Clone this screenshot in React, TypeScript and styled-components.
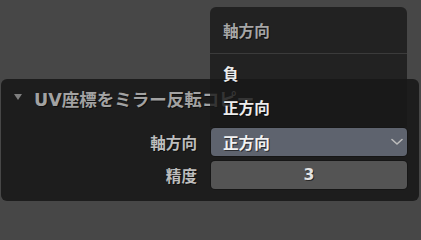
import React from 'react'
import styled, { createGlobalStyle } from 'styled-components'

const GlobalStyle = createGlobalStyle`
  html, body {
    margin: 0;
    padding: 0;
    background: #474747;
  }
  body {
    font-family: "DejaVu Sans", "Noto Sans CJK JP", sans-serif;
    width: 421px;
    height: 206px;
    overflow: hidden;
  }
`

const Page = styled.div`
  position: relative;
  width: 421px;
  height: 206px;
  padding-top: 79px;
  padding-left: 1px;
  box-sizing: border-box;
`

const Panel = styled.div`
  width: 418px;
  height: 122px;
  background: #1d1d1d;
  border-radius: 6px;
  display: flex;
  flex-direction: column;
`

const Header = styled.div`
  display: flex;
  align-items: center;
  height: 38px;
  padding-left: 13px;
  gap: 12px;
  color: #a2a2a2;
  font-size: 17.5px;
  font-weight: 700;
  white-space: nowrap;
  text-shadow: 1px 1px 0 rgba(0, 0, 0, 0.5);
`

const Arrow = styled.span`
  width: 0;
  height: 0;
  border-left: 4px solid transparent;
  border-right: 4px solid transparent;
  border-top: 6px solid #7f7f7f;
  margin-top: -2px;
`

const Body = styled.div`
  display: grid;
  grid-template-columns: 1fr 196px;
  grid-auto-rows: 28px;
  column-gap: 14px;
  row-gap: 5px;
  padding: 11px 12px 0 0;
`

const Label = styled.div`
  display: flex;
  align-items: center;
  justify-content: flex-end;
  color: #bdbdbd;
  font-size: 15.6px;
  font-weight: 700;
  text-shadow: 1px 1px 0 rgba(0, 0, 0, 0.5);
`

const Field = styled.div<{ $tone: 'select' | 'number' }>`
  display: flex;
  align-items: center;
  justify-content: ${p => (p.$tone === 'number' ? 'center' : 'space-between')};
  background: ${p => (p.$tone === 'number' ? '#545454' : '#5e636e')};
  border-radius: 4px;
  box-shadow: 0 0 0 1px #161616;
  padding: ${p => (p.$tone === 'number' ? '0' : '0 4px 0 12px')};
  color: ${p => (p.$tone === 'number' ? '#e2e2e2' : '#f2f2f2')};
  font-size: 15.6px;
  font-weight: 700;
  text-shadow: 1px 1px 0 rgba(0, 0, 0, 0.55);
`

const Menu = styled.div`
  position: absolute;
  top: 7px;
  left: 210px;
  width: 197px;
  height: 120px;
  background: rgba(25, 25, 25, 0.8);
  border-radius: 6px 6px 0 0;
  display: flex;
  flex-direction: column;
  box-sizing: border-box;
  padding-bottom: 3px;
`

const MenuTitle = styled.div`
  height: 46px;
  display: flex;
  align-items: center;
  padding-left: 13px;
  color: #a6a6a6;
  font-size: 15.6px;
  font-weight: 700;
  text-shadow: 1px 1px 0 rgba(0, 0, 0, 0.5);
`

const Separator = styled.div`
  height: 1px;
  background: #3b3b3b;
  margin-bottom: 2px;
`

const MenuItem = styled.div`
  height: 34px;
  display: flex;
  align-items: center;
  padding-left: 13px;
  color: #ececec;
  font-size: 15.6px;
  font-weight: 700;
  text-shadow: 1px 1px 0 rgba(0, 0, 0, 0.5);
`

const Chevron = () => (
  <svg width="12" height="8" viewBox="0 0 12 8">
    <path d="M1 1.5 L6 6 L11 1.5" fill="none" stroke="#bcbcbc" strokeWidth="1.6" strokeLinecap="round" strokeLinejoin="round" />
  </svg>
)

export default function App() {
  return (
    <>
      <GlobalStyle />
      <Page>
        <Panel>
          <Header>
            <Arrow />
            <span>UV座標をミラー反転コピー</span>
          </Header>
          <Body>
            <Label>軸方向</Label>
            <Field $tone="select">
              <span>正方向</span>
              <Chevron />
            </Field>
            <Label>精度</Label>
            <Field $tone="number">3</Field>
          </Body>
        </Panel>
        <Menu>
          <MenuTitle>軸方向</MenuTitle>
          <Separator />
          <MenuItem>負</MenuItem>
          <MenuItem>正方向</MenuItem>
        </Menu>
      </Page>
    </>
  )
}
